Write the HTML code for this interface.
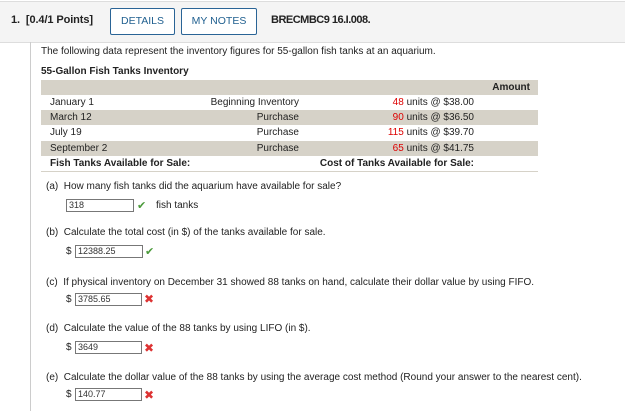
<!DOCTYPE html>
<html><head><style>
body{margin:0;width:625px;height:411px;background:#fff;font-family:"Liberation Sans","DejaVu Sans",sans-serif;font-size:10px;color:#222;position:relative;overflow:hidden}
.a{position:absolute;white-space:nowrap}
.hdr{position:absolute;left:0;top:1px;width:625px;height:40px;background:#f4f4f4;border-top:1px solid #ddd;border-bottom:1px solid #ddd}
.btn{position:absolute;top:8px;height:25px;border:1px solid #2a6496;border-radius:2px;background:#fff;color:#1f5f8f;font-size:10.5px;line-height:25px;text-align:center}
.vl{position:absolute;left:30px;top:42px;width:1px;height:369px;background:#ccc}
.row{position:absolute;left:41px;width:497px;height:15px;line-height:15px}
.g{background:#d6d2c8}
.r{color:#d00}
.box{position:absolute;height:11px;border:1px solid #777;font-size:9px;line-height:11px;padding-left:2px;color:#333}
.ck{color:#4a9a3a;font-size:11px}
.x{color:#d33;font-size:12px;font-weight:bold}
</style></head><body>
<div class="hdr"></div>
<div class="a" style="left:11px;top:14px;font-size:11px;font-weight:bold;letter-spacing:-0.1px">1.&nbsp; [0.4/1 Points]</div>
<div class="btn" style="left:110px;width:63px">DETAILS</div>
<div class="btn" style="left:181px;width:74px">MY NOTES</div>
<div class="a" style="left:271px;top:14px;font-size:11px;font-weight:bold;letter-spacing:-0.5px">BRECMBC9 16.I.008.</div>
<div class="vl"></div>
<div class="a" style="left:41px;top:46px">The following data represent the inventory figures for 55-gallon fish tanks at an aquarium.</div>
<div class="a" style="left:41px;top:66px;font-weight:bold">55-Gallon Fish Tanks Inventory</div>
<div class="row g" style="top:80px"><span class="a" style="right:8px;font-weight:bold">Amount</span></div>
<div class="row" style="top:95px"><span class="a" style="left:9px">January 1</span><span class="a" style="right:239px">Beginning Inventory</span><span class="a" style="right:64px"><span class="r">48</span> units @ $38.00</span></div>
<div class="row g" style="top:110px"><span class="a" style="left:9px">March 12</span><span class="a" style="right:239px">Purchase</span><span class="a" style="right:64px"><span class="r">90</span> units @ $36.50</span></div>
<div class="row" style="top:125px"><span class="a" style="left:9px">July 19</span><span class="a" style="right:239px">Purchase</span><span class="a" style="right:64px"><span class="r">115</span> units @ $39.70</span></div>
<div class="row g" style="top:141px"><span class="a" style="left:9px">September 2</span><span class="a" style="right:239px">Purchase</span><span class="a" style="right:64px"><span class="r">65</span> units @ $41.75</span></div>
<div class="row" style="top:156px;font-weight:bold;border-bottom:1px solid #d6d2c8"><span class="a" style="left:9px">Fish Tanks Available for Sale:</span><span class="a" style="right:64px">Cost of Tanks Available for Sale:</span></div>

<div class="a" style="left:46px;top:181px">(a)&nbsp; How many fish tanks did the aquarium have available for sale?</div>
<div class="box" style="left:66px;top:199px;width:64px">318</div>
<div class="a ck" style="left:137px;top:199px">✔</div>
<div class="a" style="left:156px;top:200px">fish tanks</div>

<div class="a" style="left:46px;top:227px">(b)&nbsp; Calculate the total cost (in $) of the tanks available for sale.</div>
<div class="a" style="left:66px;top:246px">$</div>
<div class="box" style="left:75px;top:245px;width:64px">12388.25</div>
<div class="a ck" style="left:145px;top:245px">✔</div>

<div class="a" style="left:46px;top:277px">(c)&nbsp; If physical inventory on December 31 showed 88 tanks on hand, calculate their dollar value by using FIFO.</div>
<div class="a" style="left:66px;top:294px">$</div>
<div class="box" style="left:75px;top:293px;width:63px">3785.65</div>
<div class="a x" style="left:144px;top:292px">✖</div>

<div class="a" style="left:46px;top:323px">(d)&nbsp; Calculate the value of the 88 tanks by using LIFO (in $).</div>
<div class="a" style="left:66px;top:342px">$</div>
<div class="box" style="left:75px;top:341px;width:63px">3649</div>
<div class="a x" style="left:144px;top:341px">✖</div>

<div class="a" style="left:46px;top:372px">(e)&nbsp; Calculate the dollar value of the 88 tanks by using the average cost method (Round your answer to the nearest cent).</div>
<div class="a" style="left:66px;top:389px">$</div>
<div class="box" style="left:75px;top:388px;width:63px">140.77</div>
<div class="a x" style="left:144px;top:388px">✖</div>
</body></html>
